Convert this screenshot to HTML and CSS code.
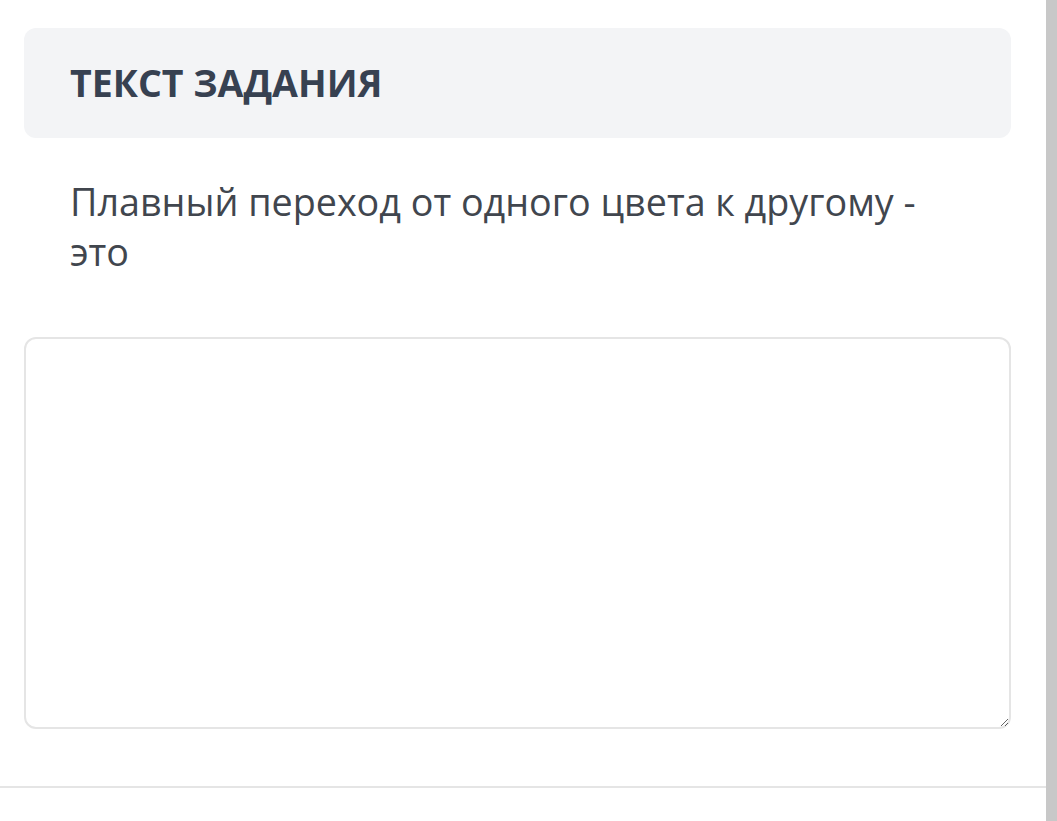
FILE: index.html
```html
<!DOCTYPE html>
<html lang="ru">
<head>
<meta charset="utf-8">
<link rel="stylesheet" href="styles.css">
</head>
<body>
<div class="page">
  <main class="content">
    <div class="task-head">
      <h2 class="task-title">ТЕКСТ ЗАДАНИЯ</h2>
    </div>
    <p class="task-text">Плавный переход от одного цвета к другому - это</p>
    <textarea class="answer"></textarea>
    <div class="divider"></div>
  </main>
  <div class="scrollbar"></div>
</div>
</body>
</html>
```

FILE: styles.css
```css
html, body {
  margin: 0;
  padding: 0;
  background: #ffffff;
  height: 100%;
  overflow: hidden;
}
.page {
  display: flex;
  height: 821px;
  font-family: "Open Sans", "Noto Sans", sans-serif;
  color: #374151;
}
.content {
  flex: 1;
  padding: 28px 35px 0 24px;
  display: flex;
  flex-direction: column;
}
.scrollbar {
  width: 11px;
  background: #c8c8c8;
}
.task-head {
  height: 110px;
  box-sizing: border-box;
  background: #f3f4f6;
  border-radius: 12px;
  display: flex;
  align-items: center;
  padding-left: 46px;
}
.task-title {
  margin: 0;
  font-size: 37.5px;
  font-weight: 700;
  color: #374151;
  line-height: 1;
}
.task-text {
  margin: 39px 46px 0 46px;
  font-size: 37.7px;
  line-height: 50px;
  color: #41464e;
}
.answer {
  margin-top: 60px;
  height: 392px;
  box-sizing: border-box;
  border: 2px solid #e5e5e5;
  border-radius: 12px;
  background: #fff;
  resize: vertical;
  outline: none;
  display: block;
  width: 100%;
}
.divider {
  margin: 57px -35px 0 -24px;
  height: 2px;
  background: #e5e5e5;
}
```
